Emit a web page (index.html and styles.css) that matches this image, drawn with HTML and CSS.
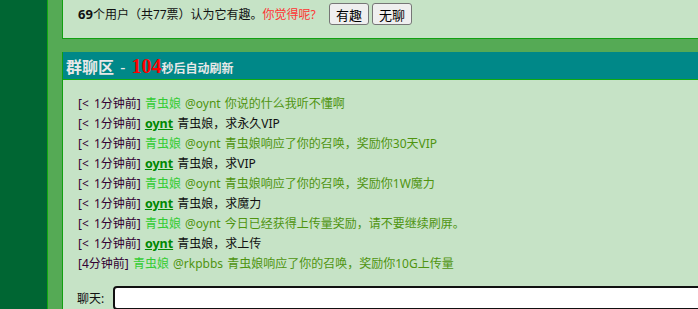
FILE: index.html
```html
<!DOCTYPE html>
<html lang="zh-CN">
<head>
  <meta charset="UTF-8">
  <title>群聊区</title>
  <link rel="stylesheet" href="styles.css">
</head>
<body>

<div class="main">

  <div class="panel vote">
    <span class="count">69</span>个用户（共77票）认为它有趣。<span class="ask">你觉得呢?</span>
    <button>有趣</button> <button>无聊</button>
  </div>

  <div class="panel chat">
    <div class="chat-head">
      <span class="title">群聊区</span> <span class="dash">-</span> <span class="timer">104</span><span class="refresh">秒后自动刷新</span>
    </div>

    <div class="chat-lines">
      <div class="line"><span class="time">[&lt; 1分钟前]</span> <span class="bot">青虫娘</span> <span class="reply">@oynt 你说的什么我听不懂啊</span></div>
      <div class="line"><span class="time">[&lt; 1分钟前]</span> <a class="user" href="#">oynt</a> <span class="msg">青虫娘，求永久VIP</span></div>
      <div class="line"><span class="time">[&lt; 1分钟前]</span> <span class="bot">青虫娘</span> <span class="reply">@oynt 青虫娘响应了你的召唤，奖励你30天VIP</span></div>
      <div class="line"><span class="time">[&lt; 1分钟前]</span> <a class="user" href="#">oynt</a> <span class="msg">青虫娘，求VIP</span></div>
      <div class="line"><span class="time">[&lt; 1分钟前]</span> <span class="bot">青虫娘</span> <span class="reply">@oynt 青虫娘响应了你的召唤，奖励你1W魔力</span></div>
      <div class="line"><span class="time">[&lt; 1分钟前]</span> <a class="user" href="#">oynt</a> <span class="msg">青虫娘，求魔力</span></div>
      <div class="line"><span class="time">[&lt; 1分钟前]</span> <span class="bot">青虫娘</span> <span class="reply">@oynt 今日已经获得上传量奖励，请不要继续刷屏。</span></div>
      <div class="line"><span class="time">[&lt; 1分钟前]</span> <a class="user" href="#">oynt</a> <span class="msg">青虫娘，求上传</span></div>
      <div class="line"><span class="time">[4分钟前]</span> <span class="bot">青虫娘</span> <span class="reply">@rkpbbs 青虫娘响应了你的召唤，奖励你10G上传量</span></div>
    </div>

    <div class="say">
      <label for="sayInput">聊天:</label>
      <input type="text" id="sayInput">
    </div>
  </div>

</div>

</body>
</html>
```

FILE: styles.css
```css
body {
  margin: 0;
  background: #006633;
  font-family: "Noto Sans", "Noto Sans CJK SC", sans-serif;
  font-size: 12px;
  color: #111;
  overflow: hidden;
}
.main {
  margin-left: 47px;
  width: 800px;
  height: 320px;
  background: #55aa55;
  border-left: 1px solid #11aa11;
  padding-left: 14px;
}
.panel {
  background: #c6e3c6;
  border: 1px solid #11a011;
  border-top: none;
}

/* vote box */
.vote {
  height: 39px;
  box-sizing: border-box;
  padding: 5px 15px 0;
  line-height: 19px;
}
.vote .count {
  font-weight: bold;
  font-size: 13px;
}
.vote .ask {
  color: #ff3333;
  margin-right: 10px;
}
.vote button {
  font-family: inherit;
  font-size: 13px;
  height: 22px;
  padding: 0 6px;
  margin: -2px 0 0;
  vertical-align: top;
  background: #efefef;
  border: 1px solid #767676;
  border-radius: 3px;
  color: #000;
}

/* chat box */
.chat {
  margin-top: 13px;
  height: 300px;
}
.chat-head {
  background: #008888;
  border-bottom: 1px solid #11aa11;
  height: 27px;
  line-height: 28px;
  padding-left: 3px;
  color: #e8e8e8;
  font-size: 16px;
  white-space: nowrap;
}
.chat-head .title {
  font-weight: bold;
}
.chat-head .dash {
  margin: 0 2px;
}
.chat-head .timer {
  color: #ff0000;
  font-family: "Liberation Serif", serif;
  font-weight: bold;
  font-size: 20px;
}
.chat-head .refresh {
  font-size: 12px;
  font-weight: bold;
}
.chat-lines {
  padding: 14px 15px 0;
}
.line {
  height: 20px;
  line-height: 20px;
  white-space: nowrap;
  word-spacing: 1px;
}
.time {
  color: #330033;
  word-spacing: 2px;
}
.bot {
  color: #33cc33;
}
.reply {
  color: #4f9410;
}
.user {
  color: #008800;
  font-weight: bold;
  font-size: 12.5px;
}
.msg {
  color: #111;
}
.say {
  display: flex;
  align-items: center;
  margin-top: 12px;
  padding-left: 14px;
}
.say label {
  margin-right: 9px;
}
.say input {
  width: 650px;
  height: 24px;
  box-sizing: border-box;
  border: 2px solid #111;
  border-radius: 4px;
  background: #fff;
}
```
